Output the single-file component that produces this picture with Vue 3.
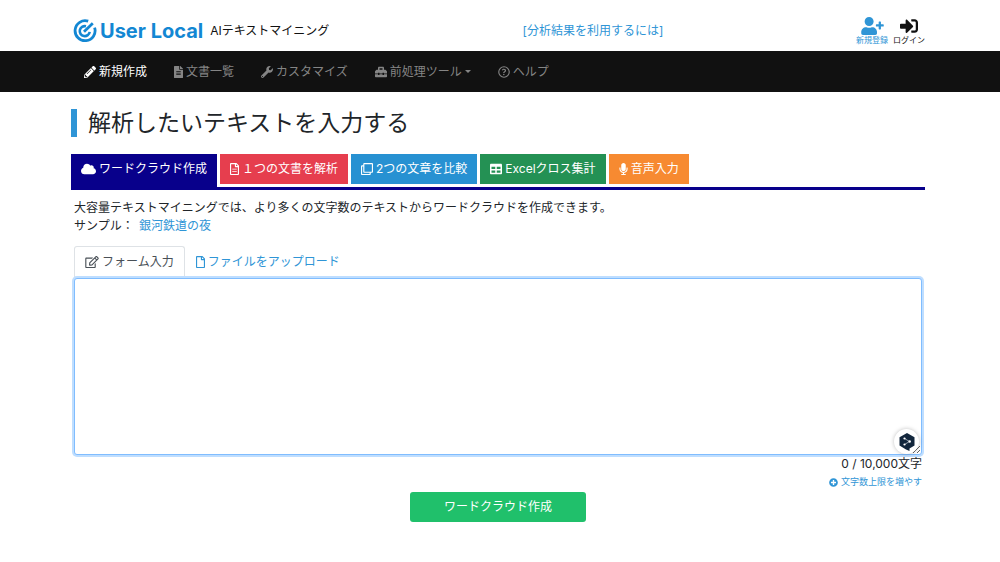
<script setup>
import { ref } from 'vue'

const text = ref('')

const filePath = 'M369.9 97.9L286 14C277 5 264.8-.1 252.1-.1H48C21.5 0 0 21.5 0 48v416c0 26.5 21.5 48 48 48h288c26.5 0 48-21.5 48-48V131.9c0-12.7-5.1-25-14.1-34zM332.1 128H256V51.9l76.1 76.1zM48 464V48h160v104c0 13.3 10.7 24 24 24h104v288H48z'

const navItems = [
  { label: '新規作成', active: true, w: 12, box: '0 0 512 512', d: 'M497.9 142.1l-46.1 46.1c-4.7 4.7-12.3 4.7-17 0l-111-111c-4.7-4.7-4.7-12.3 0-17l46.1-46.1c18.7-18.7 49.1-18.7 67.9 0l60.1 60.1c18.8 18.7 18.8 49.1 0 67.9zM284.2 99.8L21.6 362.4.4 483.9c-2.9 16.4 11.4 30.6 27.8 27.8l121.5-21.3 262.6-262.6c4.7-4.7 4.7-12.3 0-17l-111-111c-4.8-4.7-12.4-4.7-17.1 0zM124.1 339.9c-5.5-5.5-5.5-14.3 0-19.8l154-154c5.5-5.5 14.3-5.5 19.8 0s5.5 14.3 0 19.8l-154 154c-5.5 5.5-14.3 5.5-19.8 0zM88 424h48v36.3l-64.5 11.3-31.1-31.1L51.7 376H88v48z' },
  { label: '文書一覧', w: 9, box: '0 0 384 512', d: 'M224 136V0H24C10.7 0 0 10.7 0 24v464c0 13.3 10.7 24 24 24h336c13.3 0 24-10.7 24-24V160H248c-13.2 0-24-10.8-24-24zm64 236c0 6.6-5.4 12-12 12H108c-6.6 0-12-5.4-12-12v-8c0-6.6 5.4-12 12-12h168c6.6 0 12 5.4 12 12v8zm0-64c0 6.6-5.4 12-12 12H108c-6.6 0-12-5.4-12-12v-8c0-6.6 5.4-12 12-12h168c6.6 0 12 5.4 12 12v8zm0-72v8c0 6.6-5.4 12-12 12H108c-6.6 0-12-5.4-12-12v-8c0-6.6 5.4-12 12-12h168c6.6 0 12 5.4 12 12zm96-114.1v6.1H256V0h6.1c6.4 0 12.5 2.5 17 7l97.9 98c4.5 4.5 7 10.6 7 16.9z' },
  { label: 'カスタマイズ', w: 12, box: '0 0 512 512', d: 'M507.73 109.1c-2.24-9.03-13.54-12.09-20.12-5.51l-74.36 74.36-67.88-11.31-11.31-67.88 74.36-74.36c6.62-6.62 3.43-17.9-5.66-20.16-47.38-11.74-99.55.91-136.58 37.93-39.64 39.64-50.55 97.1-34.05 147.2L18.74 402.76c-24.99 24.99-24.99 65.51 0 90.5 24.99 24.99 65.51 24.99 90.5 0l213.21-213.21c50.12 16.71 107.47 5.68 147.37-34.22 37.07-37.07 49.7-89.32 37.91-136.73zM64 472c-13.25 0-24-10.75-24-24 0-13.26 10.75-24 24-24s24 10.74 24 24c0 13.25-10.75 24-24 24z' },
  { label: '前処理ツール', caret: true, w: 12, box: '0 0 512 512', d: 'M502.63 214.63l-45.25-45.25c-6-6-14.14-9.37-22.63-9.37H384V80c0-26.51-21.49-48-48-48H176c-26.51 0-48 21.49-48 48v80H77.25c-8.49 0-16.62 3.37-22.63 9.37L9.37 214.63c-6 6-9.37 14.14-9.37 22.63V320h128v-16c0-8.84 7.16-16 16-16h32c8.84 0 16 7.16 16 16v16h128v-16c0-8.84 7.16-16 16-16h32c8.84 0 16 7.16 16 16v16h128v-82.75c0-8.48-3.37-16.62-9.37-22.62zM320 160H192V96h128v64zm64 208c0 8.84-7.16 16-16 16h-32c-8.84 0-16-7.16-16-16v-16H192v16c0 8.84-7.16 16-16 16h-32c-8.84 0-16-7.16-16-16v-16H0v96c0 17.67 14.33 32 32 32h448c17.67 0 32-14.33 32-32v-96H384v16z' },
  { label: 'ヘルプ', w: 12, box: '0 0 512 512', d: 'M256 8a248 248 0 1 0 0 496a248 248 0 1 0 0-496zm0 48a200 200 0 1 1 0 400a200 200 0 1 1 0-400zM256 118c-44 0-72 19-92 53l31 24c17-22 31-32 57-32 22 0 40 13 40 31 0 17-12 25-31 36-25 14-39 31-39 60v12h50v-8c0-20 72-25 72-98 0-45-44-78-88-78zm-8 210a31 31 0 1 0 0 62a31 31 0 1 0 0-62z' }
]

const modes = [
  { label: 'ワードクラウド作成', tone: 'navy', w: 15, box: '0 0 640 512', d: 'M537.6 226.6c4.1-10.7 6.4-22.4 6.4-34.6 0-53-43-96-96-96-19.7 0-38.1 6-53.3 16.2C367 64.2 315.3 32 256 32c-88.4 0-160 71.6-160 160 0 2.7.1 5.4.2 8.1C40.2 219.8 0 273.2 0 336c0 79.5 64.5 144 144 144h368c70.7 0 128-57.3 128-128 0-61.9-44-113.6-102.4-125.4z' },
  { label: '１つの文書を解析', tone: 'red', w: 9, box: '0 0 384 512', d: filePath + 'M96 240h192v40H96zM96 336h192v40H96z' },
  { label: '2つの文章を比較', tone: 'blue', w: 12, box: '0 0 512 512', d: 'M464 0H144c-26.51 0-48 21.49-48 48v48H48c-26.51 0-48 21.49-48 48v320c0 26.51 21.49 48 48 48h320c26.51 0 48-21.49 48-48v-48h48c26.51 0 48-21.49 48-48V48c0-26.51-21.49-48-48-48zM362 464H54a6 6 0 0 1-6-6V150a6 6 0 0 1 6-6h42v224c0 26.51 21.49 48 48 48h224v42a6 6 0 0 1-6 6zm96-96H150a6 6 0 0 1-6-6V54a6 6 0 0 1 6-6h308a6 6 0 0 1 6 6v308a6 6 0 0 1-6 6z' },
  { label: 'Excelクロス集計', tone: 'green', w: 12, box: '0 0 512 512', d: 'M464 32H48C21.49 32 0 53.49 0 80v352c0 26.51 21.49 48 48 48h416c26.51 0 48-21.49 48-48V80c0-26.51-21.49-48-48-48zM224 416H64v-96h160v96zm0-160H64v-96h160v96zm224 160H288v-96h160v96zm0-160H288v-96h160v96z' },
  { label: '音声入力', tone: 'orange', w: 9, box: '0 0 352 512', d: 'M176 352c53.02 0 96-42.98 96-96V96c0-53.02-42.98-96-96-96S80 42.98 80 96v160c0 53.02 42.98 96 96 96zm160-160h-16c-8.84 0-16 7.16-16 16v48c0 74.8-64.49 134.82-140.79 127.38C96.71 376.89 48 317.11 48 250.3V208c0-8.84-7.16-16-16-16H16c-8.84 0-16 7.16-16 16v40.16c0 89.64 63.97 169.55 152 181.69V464H96c-8.84 0-16 7.16-16 16v16c0 8.84 7.16 16 16 16h160c8.84 0 16-7.16 16-16v-16c0-8.84-7.16-16-16-16h-56v-33.77C285.71 418.47 352 344.9 352 256v-48c0-8.84-7.16-16-16-16z' }
]
</script>

<template>
  <div class="page">
    <header class="top">
      <a class="brand" href="#">
        <svg width="24" height="24" viewBox="0 0 24 24" fill="none" stroke="#1387d3" aria-hidden="true">
          <path d="M15.200 2.200A10 10 0 1 0 21.600 8.600" stroke-width="2.800" />
          <path d="M13 7.300A5 5 0 1 0 16.700 12.800" stroke-width="2.600" />
          <path d="M11 12.800L19.800 4.200" stroke-width="2.800" />
        </svg>
        <span class="brand-name">User Local</span>
        <span class="brand-sub">AIテキストマイニング</span>
      </a>
      <a class="usage" href="#">[分析結果を利用するには]</a>
      <div class="account">
        <a class="signup" href="#">
          <svg width="23" height="18" viewBox="0 0 640 512" fill="currentColor" aria-hidden="true"><path d="M624 208h-64v-64c0-8.800-7.200-16-16-16h-32c-8.800 0-16 7.200-16 16v64h-64c-8.800 0-16 7.200-16 16v32c0 8.800 7.200 16 16 16h64v64c0 8.800 7.200 16 16 16h32c8.800 0 16-7.200 16-16v-64h64c8.800 0 16-7.200 16-16v-32c0-8.800-7.200-16-16-16zm-400 48c70.700 0 128-57.300 128-128S294.700 0 224 0 96 57.300 96 128s57.300 128 128 128zm89.600 32h-16.700c-22.200 10.200-46.900 16-72.900 16s-50.600-5.800-72.900-16h-16.700C60.200 288 0 348.200 0 422.400V464c0 26.500 21.500 48 48 48h352c26.500 0 48-21.500 48-48v-41.600c0-74.200-60.200-134.400-134.400-134.400z" /></svg>
          <span>新規登録</span>
        </a>
        <a class="login" href="#">
          <svg width="18" height="18" viewBox="0 0 512 512" fill="currentColor" aria-hidden="true"><path d="M416 448h-84c-6.600 0-12-5.400-12-12v-40c0-6.600 5.400-12 12-12h84c17.700 0 32-14.300 32-32V160c0-17.700-14.300-32-32-32h-84c-6.600 0-12-5.400-12-12V76c0-6.600 5.400-12 12-12h84c53 0 96 43 96 96v192c0 53-43 96-96 96zm-47-201L201 79c-15-15-41-4.500-41 17v96H24c-13.300 0-24 10.700-24 24v96c0 13.300 10.700 24 24 24h136v96c0 21.500 26 32 41 17l168-168c9.300-9.400 9.300-24.600 0-34z" /></svg>
          <span>ログイン</span>
        </a>
      </div>
    </header>

    <nav class="nav">
      <a v-for="item in navItems" :key="item.label" href="#" :class="{ active: item.active }">
        <svg :width="item.w" height="12" :viewBox="item.box" fill="currentColor" fill-rule="evenodd" aria-hidden="true"><path :d="item.d" /></svg>
        <span>{{ item.label }}</span>
        <i v-if="item.caret" class="caret"></i>
      </a>
    </nav>

    <main class="main">
      <h1>解析したいテキストを入力する</h1>

      <div class="modes">
        <a v-for="mode in modes" :key="mode.label" href="#" :class="mode.tone">
          <svg :width="mode.w" height="12" :viewBox="mode.box" fill="currentColor" fill-rule="evenodd" aria-hidden="true"><path :d="mode.d" /></svg>
          <span>{{ mode.label }}</span>
        </a>
      </div>

      <div class="panel">
        <p>大容量テキストマイニングでは、より多くの文字数のテキストからワードクラウドを作成できます。</p>
        <p>サンプル： <a class="sample" href="#">銀河鉄道の夜</a></p>

        <div class="inputs">
          <button type="button" class="current">
            <svg width="14" height="12" viewBox="0 0 576 512" fill="currentColor" aria-hidden="true"><path d="M402.300 344.900l32-32c5-5 13.700-1.500 13.700 5.700V464c0 26.500-21.500 48-48 48H48c-26.500 0-48-21.500-48-48V112c0-26.500 21.500-48 48-48h273.500c7.100 0 10.700 8.600 5.700 13.700l-32 32c-1.500 1.500-3.500 2.300-5.700 2.300H48v352h352V350.500c0-2.100.8-4.100 2.300-5.600zm156.600-201.800L296.300 405.700l-90.400 10c-26.200 2.900-48.500-19.200-45.600-45.600l10-90.400L432.900 17.100c22.900-22.900 59.900-22.900 82.700 0l43.200 43.200c22.900 22.900 22.900 60 .1 82.800zM460.100 174L402 115.900 216.200 301.800l-7.300 65.300 65.300-7.300L460.100 174zm64.800-79.700l-43.200-43.200c-4.100-4.100-10.800-4.100-14.800 0L436 82l58.100 58.100 30.900-30.900c4-4.200 4-10.800-.1-14.900z" /></svg>
            <span>フォーム入力</span>
          </button>
          <button type="button">
            <svg width="9" height="12" viewBox="0 0 384 512" fill="currentColor" aria-hidden="true"><path :d="filePath" /></svg>
            <span>ファイルをアップロード</span>
          </button>
        </div>

        <div class="editor">
          <textarea v-model="text" aria-label="解析したいテキスト" maxlength="10000"></textarea>
          <button type="button" class="translate" aria-label="翻訳">
            <svg width="16" height="18" viewBox="0 0 16 18" aria-hidden="true">
              <path d="M8 0L15.500 4.300V12.600L10.500 15.500V18L7 16.400L.5 12.600V4.300Z" fill="#12263c" />
              <path d="M5.500 5.500L10.500 8.500L5.500 11.500" fill="none" stroke="#b9c2cc" stroke-width="0.800" />
              <circle cx="5.500" cy="5.500" r="1.100" fill="#fff" />
              <circle cx="10.700" cy="8.500" r="1.200" fill="#fff" />
              <circle cx="5.500" cy="11.500" r="1.100" fill="#fff" />
            </svg>
          </button>
        </div>

        <div class="count">{{ text.length }} / 10,000文字</div>
        <a class="more" href="#">
          <svg width="9" height="9" viewBox="0 0 512 512" fill="currentColor" aria-hidden="true"><path d="M256 8C119 8 8 119 8 256s111 248 248 248 248-111 248-248S393 8 256 8zm144 276c0 6.600-5.400 12-12 12h-92v92c0 6.600-5.400 12-12 12h-56c-6.600 0-12-5.400-12-12v-92h-92c-6.600 0-12-5.400-12-12v-56c0-6.600 5.400-12 12-12h92v-92c0-6.600 5.400-12 12-12h56c6.600 0 12 5.400 12 12v92h92c6.600 0 12 5.400 12 12v56z" /></svg>
          <span>文字数上限を増やす</span>
        </a>
        <button type="button" class="submit">ワードクラウド作成</button>
      </div>
    </main>
  </div>
</template>

<style>
body {
  background: #fff;
}
</style>

<style scoped>
.page {
  font-family: Inter, "Noto Sans CJK JP", sans-serif;
  font-size: 12px;
  line-height: 18px;
  color: #212529;
}
a {
  color: #2f95d6;
  text-decoration: none;
}
button {
  font: inherit;
  cursor: pointer;
}
svg {
  flex: none;
}
span {
  white-space: nowrap;
}
.top {
  display: grid;
  grid-template-columns: 1fr auto 1fr;
  align-items: center;
  height: 51px;
  box-sizing: border-box;
  padding: 10px 75px 0 73px;
}
.brand {
  display: flex;
  align-items: center;
  gap: 3px;
}
.brand-name {
  font-size: 20px;
  font-weight: 700;
  color: #1387d3;
}
.brand-sub {
  margin-left: 4px;
  color: #111;
}
.usage {
  margin-left: 188px;
}
.account {
  display: flex;
  justify-content: flex-end;
  gap: 5px;
  font-size: 8px;
  line-height: 10px;
}
.account a {
  display: flex;
  flex-direction: column;
  align-items: center;
}
.account .login {
  color: #111;
}
.nav {
  display: flex;
  align-items: center;
  gap: 27px;
  height: 41px;
  padding: 0 84px;
  background: #111;
}
.nav a {
  display: flex;
  align-items: center;
  gap: 3px;
  color: #858585;
}
.nav a.active {
  color: #fff;
}
.caret {
  border: 3px solid transparent;
  border-top-color: currentColor;
  border-bottom: 0;
}
.main {
  padding: 17px 75px 0 71px;
}
h1 {
  margin: 0 0 17px;
  padding-left: 11px;
  border-left: 6px solid #2f95d6;
  font-size: 23px;
  line-height: 28px;
  font-weight: 400;
}
.modes {
  display: flex;
  align-items: flex-start;
  gap: 3px;
  border-bottom: 3px solid #08008b;
}
.modes a {
  display: flex;
  align-items: center;
  gap: 3px;
  height: 30px;
  padding: 0 10px;
  color: #fff;
}
.modes .navy {
  padding-bottom: 3px;
  background: #08008b;
}
.modes .red {
  background: #e63e4e;
}
.modes .blue {
  background: #2791d2;
}
.modes .green {
  background: #249154;
}
.modes .orange {
  background: #f78a31;
}
.panel {
  display: flex;
  flex-direction: column;
  padding: 9px 3px 0;
}
p {
  margin: 0;
}
.sample {
  margin-left: 2px;
}
.inputs {
  display: flex;
  margin-top: 11px;
}
.inputs button {
  display: flex;
  align-items: center;
  gap: 3px;
  height: 32px;
  padding: 0 10px;
  border: 1px solid transparent;
  border-radius: 3px 3px 0 0;
  background: none;
  color: #2f95d6;
}
.inputs .current {
  border-color: #dee2e6;
  border-bottom-color: #fff;
  color: #495057;
}
.editor {
  position: relative;
  display: flex;
}
textarea {
  flex: 1;
  height: 177px;
  box-sizing: border-box;
  padding: 4px 8px;
  border: 1px solid #80bdff;
  border-radius: 3px;
  box-shadow: 0 0 0 2px #bfdeff;
  outline: none;
  font: inherit;
  color: inherit;
  resize: both;
}
.translate {
  position: absolute;
  right: 3px;
  bottom: 1px;
  display: flex;
  align-items: center;
  justify-content: center;
  width: 25px;
  height: 25px;
  padding: 0;
  border: 0;
  border-radius: 50%;
  background: #fff;
  box-shadow: 0 0 4px rgba(0, 0, 0, 0.25);
}
.count {
  text-align: right;
}
.more {
  display: flex;
  align-items: center;
  align-self: flex-end;
  gap: 3px;
  font-size: 9px;
}
.submit {
  align-self: center;
  width: 176px;
  height: 30px;
  margin-top: 1px;
  padding: 0;
  border: 0;
  border-radius: 3px;
  background: #20c06b;
  color: #fff;
}
</style>
